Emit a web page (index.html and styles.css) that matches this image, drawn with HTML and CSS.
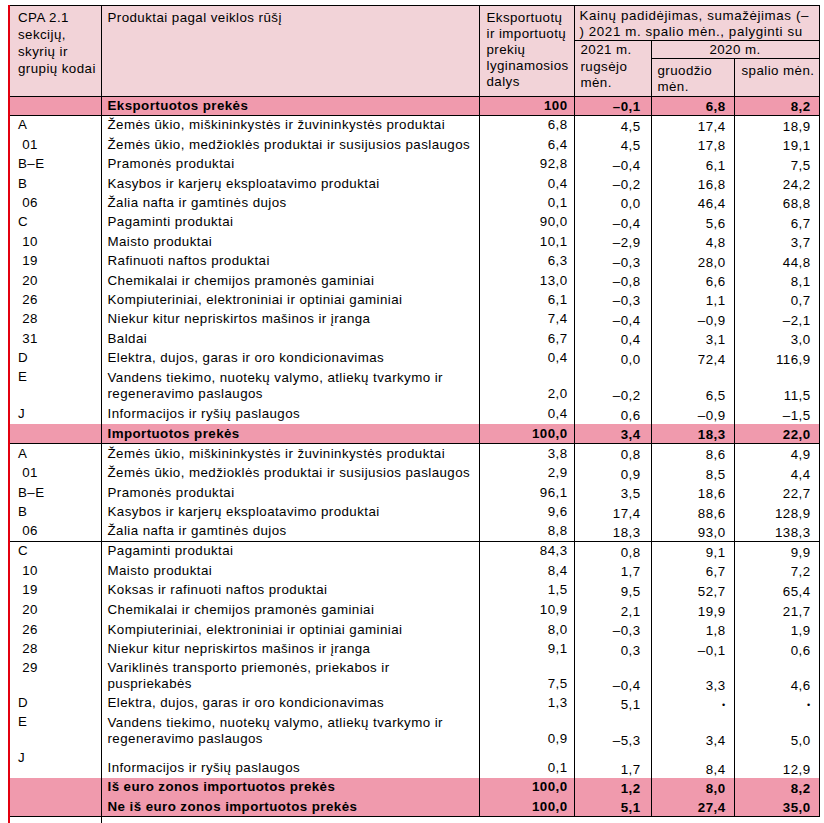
FILE: index.html
```html
<!DOCTYPE html>
<html lang="lt">
<head>
<meta charset="utf-8">
<title>Kainų pokyčiai</title>
<link rel="stylesheet" href="styles.css">
</head>
<body>
<table class="tbl">
<colgroup>
<col class="w1"><col class="w2"><col class="w3"><col class="w4"><col class="w5"><col class="w6">
</colgroup>
<tr class="h1">
<td class="hd code hc1" rowspan="3">CPA 2.1<br>sekcijų,<br>skyrių ir<br>grupių kodai</td>
<td class="hd name hc2" rowspan="3">Produktai pagal veiklos rūšį</td>
<td class="hd hc3" rowspan="3">Eksportuotų<br>ir importuotų<br>prekių<br>lyginamosios<br>dalys</td>
<td class="hd hc4 bb" colspan="3">Kainų padidėjimas, sumažėjimas (–<br>) 2021 m. spalio mėn., palyginti su</td>
</tr>
<tr class="h2">
<td class="hd hc5" rowspan="2">2021 m.<br>rugsėjo<br>mėn.</td>
<td class="hd hc6 bb" colspan="2">2020 m.</td>
</tr>
<tr class="h3">
<td class="hd hc7">gruodžio<br>mėn.</td>
<td class="hd hc8">spalio mėn.</td>
</tr>
<tr class="sec r19 bt bb">
<td class="code"></td><td class="name">Eksportuotos prekės</td><td class="n3">100</td><td class="n4">–0,1</td><td class="n5">6,8</td><td class="n6">8,2</td>
</tr>
<tr class="r"><td class="code">A</td><td class="name">Žemės ūkio, miškininkystės ir žuvininkystės produktai</td><td class="n3">6,8</td><td class="n4">4,5</td><td class="n5">17,4</td><td class="n6">18,9</td></tr>
<tr class="r"><td class="code">&nbsp;01</td><td class="name">Žemės ūkio, medžioklės produktai ir susijusios paslaugos</td><td class="n3">6,4</td><td class="n4">4,5</td><td class="n5">17,8</td><td class="n6">19,1</td></tr>
<tr class="r"><td class="code">B–E</td><td class="name">Pramonės produktai</td><td class="n3">92,8</td><td class="n4">–0,4</td><td class="n5">6,1</td><td class="n6">7,5</td></tr>
<tr class="r"><td class="code">B</td><td class="name">Kasybos ir karjerų eksploatavimo produktai</td><td class="n3">0,4</td><td class="n4">–0,2</td><td class="n5">16,8</td><td class="n6">24,2</td></tr>
<tr class="r"><td class="code">&nbsp;06</td><td class="name">Žalia nafta ir gamtinės dujos</td><td class="n3">0,1</td><td class="n4">0,0</td><td class="n5">46,4</td><td class="n6">68,8</td></tr>
<tr class="r"><td class="code">C</td><td class="name">Pagaminti produktai</td><td class="n3">90,0</td><td class="n4">–0,4</td><td class="n5">5,6</td><td class="n6">6,7</td></tr>
<tr class="r"><td class="code">&nbsp;10</td><td class="name">Maisto produktai</td><td class="n3">10,1</td><td class="n4">–2,9</td><td class="n5">4,8</td><td class="n6">3,7</td></tr>
<tr class="r"><td class="code">&nbsp;19</td><td class="name">Rafinuoti naftos produktai</td><td class="n3">6,3</td><td class="n4">–0,3</td><td class="n5">28,0</td><td class="n6">44,8</td></tr>
<tr class="r"><td class="code">&nbsp;20</td><td class="name">Chemikalai ir chemijos pramonės gaminiai</td><td class="n3">13,0</td><td class="n4">–0,8</td><td class="n5">6,6</td><td class="n6">8,1</td></tr>
<tr class="r"><td class="code">&nbsp;26</td><td class="name">Kompiuteriniai, elektroniniai ir optiniai gaminiai</td><td class="n3">6,1</td><td class="n4">–0,3</td><td class="n5">1,1</td><td class="n6">0,7</td></tr>
<tr class="r"><td class="code">&nbsp;28</td><td class="name">Niekur kitur nepriskirtos mašinos ir įranga</td><td class="n3">7,4</td><td class="n4">–0,4</td><td class="n5">–0,9</td><td class="n6">–2,1</td></tr>
<tr class="r"><td class="code">&nbsp;31</td><td class="name">Baldai</td><td class="n3">6,7</td><td class="n4">0,4</td><td class="n5">3,1</td><td class="n6">3,0</td></tr>
<tr class="r"><td class="code">D</td><td class="name">Elektra, dujos, garas ir oro kondicionavimas</td><td class="n3">0,4</td><td class="n4">0,0</td><td class="n5">72,4</td><td class="n6">116,9</td></tr>
<tr class="r2"><td class="code top">E</td><td class="name">Vandens tiekimo, nuotekų valymo, atliekų tvarkymo ir<br>regeneravimo paslaugos</td><td class="n3">2,0</td><td class="n4">–0,2</td><td class="n5">6,5</td><td class="n6">11,5</td></tr>
<tr class="r20"><td class="code">J</td><td class="name">Informacijos ir ryšių paslaugos</td><td class="n3">0,4</td><td class="n4">0,6</td><td class="n5">–0,9</td><td class="n6">–1,5</td></tr>
<tr class="sec r20 bb">
<td class="code"></td><td class="name">Importuotos prekės</td><td class="n3">100,0</td><td class="n4">3,4</td><td class="n5">18,3</td><td class="n6">22,0</td>
</tr>
<tr class="ri"><td class="code">A</td><td class="name">Žemės ūkio, miškininkystės ir žuvininkystės produktai</td><td class="n3">3,8</td><td class="n4">0,8</td><td class="n5">8,6</td><td class="n6">4,9</td></tr>
<tr class="ri"><td class="code">&nbsp;01</td><td class="name">Žemės ūkio, medžioklės produktai ir susijusios paslaugos</td><td class="n3">2,9</td><td class="n4">0,9</td><td class="n5">8,5</td><td class="n6">4,4</td></tr>
<tr class="ri"><td class="code">B–E</td><td class="name">Pramonės produktai</td><td class="n3">96,1</td><td class="n4">3,5</td><td class="n5">18,6</td><td class="n6">22,7</td></tr>
<tr class="ri"><td class="code">B</td><td class="name">Kasybos ir karjerų eksploatavimo produktai</td><td class="n3">9,6</td><td class="n4">17,4</td><td class="n5">88,6</td><td class="n6">128,9</td></tr>
<tr class="ri bb"><td class="code">&nbsp;06</td><td class="name">Žalia nafta ir gamtinės dujos</td><td class="n3">8,8</td><td class="n4">18,3</td><td class="n5">93,0</td><td class="n6">138,3</td></tr>
<tr class="ri"><td class="code">C</td><td class="name">Pagaminti produktai</td><td class="n3">84,3</td><td class="n4">0,8</td><td class="n5">9,1</td><td class="n6">9,9</td></tr>
<tr class="ri"><td class="code">&nbsp;10</td><td class="name">Maisto produktai</td><td class="n3">8,4</td><td class="n4">1,7</td><td class="n5">6,7</td><td class="n6">7,2</td></tr>
<tr class="ri"><td class="code">&nbsp;19</td><td class="name">Koksas ir rafinuoti naftos produktai</td><td class="n3">1,5</td><td class="n4">9,5</td><td class="n5">52,7</td><td class="n6">65,4</td></tr>
<tr class="ri"><td class="code">&nbsp;20</td><td class="name">Chemikalai ir chemijos pramonės gaminiai</td><td class="n3">10,9</td><td class="n4">2,1</td><td class="n5">19,9</td><td class="n6">21,7</td></tr>
<tr class="ri"><td class="code">&nbsp;26</td><td class="name">Kompiuteriniai, elektroniniai ir optiniai gaminiai</td><td class="n3">8,0</td><td class="n4">–0,3</td><td class="n5">1,8</td><td class="n6">1,9</td></tr>
<tr class="ri"><td class="code">&nbsp;28</td><td class="name">Niekur kitur nepriskirtos mašinos ir įranga</td><td class="n3">9,1</td><td class="n4">0,3</td><td class="n5">–0,1</td><td class="n6">0,6</td></tr>
<tr class="r29"><td class="code top">&nbsp;29</td><td class="name">Variklinės transporto priemonės, priekabos ir<br>puspriekabės</td><td class="n3">7,5</td><td class="n4">–0,4</td><td class="n5">3,3</td><td class="n6">4,6</td></tr>
<tr class="r19"><td class="code">D</td><td class="name">Elektra, dujos, garas ir oro kondicionavimas</td><td class="n3">1,3</td><td class="n4">5,1</td><td class="n5"><span class="dot">•</span></td><td class="n6"><span class="dot">•</span></td></tr>
<tr class="r2"><td class="code top">E</td><td class="name">Vandens tiekimo, nuotekų valymo, atliekų tvarkymo ir<br>regeneravimo paslaugos</td><td class="n3">0,9</td><td class="n4">–5,3</td><td class="n5">3,4</td><td class="n6">5,0</td></tr>
<tr class="rj"><td class="code top">J</td><td class="name">Informacijos ir ryšių paslaugos</td><td class="n3">0,1</td><td class="n4">1,7</td><td class="n5">8,4</td><td class="n6">12,9</td></tr>
<tr class="sec r19">
<td class="code"></td><td class="name">Iš euro zonos importuotos prekės</td><td class="n3">100,0</td><td class="n4">1,2</td><td class="n5">8,0</td><td class="n6">8,2</td>
</tr>
<tr class="sec r20 bb">
<td class="code"></td><td class="name">Ne iš euro zonos importuotos prekės</td><td class="n3">100,0</td><td class="n4">5,1</td><td class="n5">27,4</td><td class="n6">35,0</td>
</tr>
<tr class="tail"><td class="code"></td><td></td><td></td><td></td><td></td><td></td></tr>
</table>
</body>
</html>
```

FILE: styles.css
```css
html, body {
  margin: 0;
  background: #ffffff;
}
body {
  padding: 5px 0 0 8px;
  font-family: "Liberation Sans", Arial, sans-serif;
  font-size: 13.33px;
  letter-spacing: 0.43px;
  color: #000000;
}
.tbl {
  border-collapse: collapse;
  table-layout: fixed;
  width: 810px;
}
.w1 { width: 92px; }
.w2 { width: 378px; }
.w3 { width: 95px; }
.w4 { width: 77px; }
.w5 { width: 83px; }
.w6 { width: 85px; }

.tbl td {
  padding: 0;
  border-left: 1px solid #000;
  border-right: 1px solid #000;
  vertical-align: bottom;
  line-height: 16px;
  white-space: nowrap;
  overflow: hidden;
}
.tbl td.code {
  border-left: 2px solid #e3000f;
  padding-left: 8px;
  padding-bottom: 1.5px;
}
.tbl td.name {
  padding-left: 6px;
  padding-bottom: 1.5px;
}
.tbl td.n3 {
  text-align: right;
  padding-right: 6px;
  padding-bottom: 1.5px;
}
.tbl td.n4 { text-align: right; padding-right: 10px; }
.tbl td.n5 { text-align: right; padding-right: 8px; }
.tbl td.n6 { text-align: right; padding-right: 8px; }
.tbl td.top {
  vertical-align: top;
  padding-top: 1px;
  padding-bottom: 0;
}
.dot {
  font-size: 9px;
  line-height: 16px;
}

/* header */
.tbl td.hd {
  background: #f2d3d8;
  vertical-align: top;
  border-top: 1px solid #000;
  white-space: normal;
}
.h1 { height: 35px; }
.h2 { height: 18px; }
.h3 { height: 38px; }
.tbl td.hc1 { line-height: 17px; padding-top: 3px; padding-left: 8px; }
.tbl td.hc2 { padding-top: 4px; padding-left: 6px; }
.tbl td.hc3 { padding-top: 4px; padding-left: 7px; }
.tbl td.hc4 { padding-top: 2px; padding-left: 5px; line-height: 15.5px; letter-spacing: 0.6px; }
.tbl td.hc5 { padding-top: 1px; padding-left: 6px; line-height: 16.5px; }
.tbl td.hc6 { padding-top: 1px; text-align: center; }
.tbl td.hc7 { padding-top: 4px; padding-left: 6px; }
.tbl td.hc8 { padding-top: 4px; padding-left: 7px; }
.tbl td.bb { border-bottom: 1px solid #000; }

/* rows */
.r { height: 19.4px; }
.ri { height: 19.55px; }
.r19 { height: 19px; }
.r20 { height: 20px; }
.r2 { height: 36px; }
.r29 { height: 35px; }
.rj { height: 29px; }
.tbl tr.bt td { border-top: 1px solid #000; }
.tbl tr.bb td { border-bottom: 1px solid #000; }

.tbl tr.sec td {
  background: #f09aad;
  font-weight: bold;
}

.tail { height: 8px; }
.tbl tr.tail td {
  border: none;
}
.tbl tr.tail td.code {
  border-left: 2px solid #e3000f;
  border-right: 1px solid #000;
}
```
